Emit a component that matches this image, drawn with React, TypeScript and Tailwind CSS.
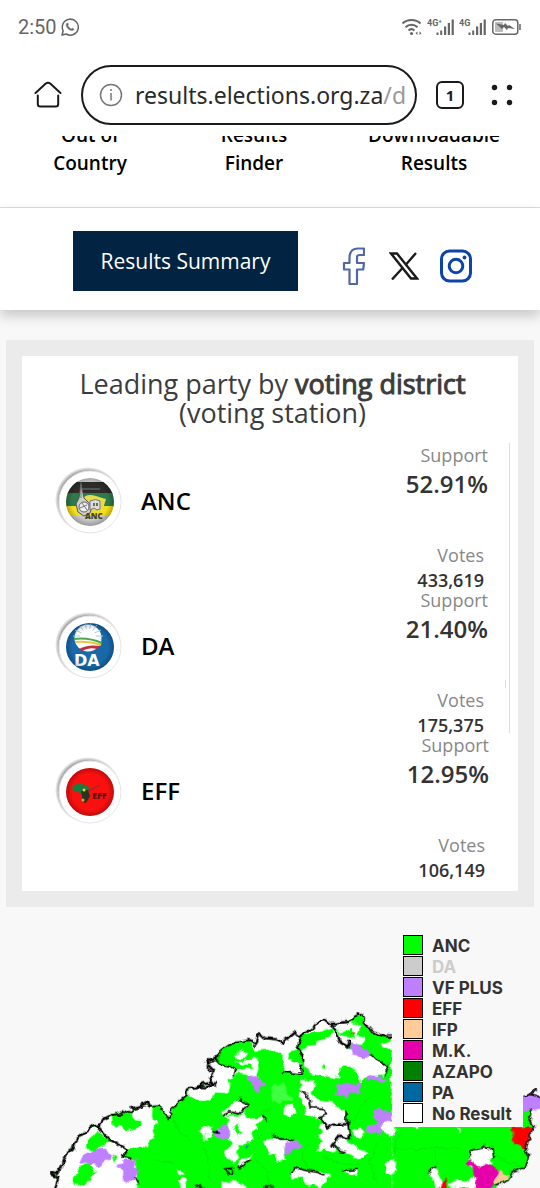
import React from "react";

const PARTIES = [
    { name: "ANC", support: "52.91%", votes: "433,619" },
    { name: "DA", support: "21.40%", votes: "175,375" },
    { name: "EFF", support: "12.95%", votes: "106,149" },
];

const LEGEND = [
    { label: "ANC", swatch: "bg-[#00ff00]", text: "text-[#333]" },
    { label: "DA", swatch: "bg-[#cccccc]", text: "text-[#cccccc]" },
    { label: "VF PLUS", swatch: "bg-[#bf80ff]", text: "text-[#333]" },
    { label: "EFF", swatch: "bg-[#ff0000]", text: "text-[#333]" },
    { label: "IFP", swatch: "bg-[#ffcc99]", text: "text-[#333]" },
    { label: "M.K.", swatch: "bg-[#e600ac]", text: "text-[#333]" },
    { label: "AZAPO", swatch: "bg-[#008000]", text: "text-[#333]" },
    { label: "PA", swatch: "bg-[#0068a0]", text: "text-[#333]" },
    { label: "No Result", swatch: "bg-white", text: "text-[#333]" },
];

const Signal = ({ label }: { label: string }) => (
    <svg viewBox="0 0 28 18" className="w-7 h-[18px]" fill="#666">
        <text x="0" y="8" fontSize="9" fontWeight="700" fontFamily="Roboto, sans-serif">{label}</text>
        <path d="M9.500 14.500h2v2.500h-2zM13.200 12.500h2v4.500h-2zM17 8.500h2.200v8.500H17zM20.800 5h2.200v12h-2.200zM24.600 1.500h2.200V17h-2.200z" />
    </svg>
);

const StatusBar = () => (
    <div className="flex items-center justify-between h-[54px] pl-[18px] pr-[18px] text-[#666]">
        <div className="flex items-center gap-1">
            <span className="font-['Roboto',sans-serif] text-[20px] leading-6">2:50</span>
            <svg viewBox="0 0 18 18" className="w-[18px] h-[18px]" fill="none" stroke="#666" strokeWidth="1.5">
                <path d="M1 17l1.200-4.200A8 8 0 1 1 5.200 16z" strokeLinejoin="round" />
                <path d="M5.500 5.600c.8-1.200 1.500-.8 2 .8l-.7 1.100c.8 1.700 1.800 2.700 3.500 3.500l1.100-.8c1.700.6 2 1.200.8 2-3.200 1.400-8.300-3.200-6.700-6.600z" fill="#666" strokeWidth=".4" />
            </svg>
        </div>
        <div className="flex items-center gap-1">
            <svg viewBox="0 0 22 18" className="w-[22px] h-[18px]" fill="none" stroke="#666" strokeWidth="2">
                <path d="M1.500 5.500c5-4.600 13-4.600 18 0M4.500 9.200c3.400-3.200 8.600-3.200 12 0M7.500 12.500c1.800-1.700 4.200-1.700 6 0" />
                <circle cx="10.500" cy="15.500" r="1.600" fill="#666" stroke="none" />
                <path d="M14.500 15.200l2-1.700v3.400zM20.500 15.200l-2-1.700v3.400z" fill="#666" stroke="none" />
            </svg>
            <Signal label="4G⁺" />
            <Signal label="4G" />
            <svg viewBox="0 0 31 18" className="w-[31px] h-[18px]" fill="none">
                <rect x="1.800" y="1.800" width="25" height="14.400" rx="3" stroke="#666" strokeWidth="1.500" />
                <rect x="4" y="4" width="8" height="10" rx="1" fill="#bbb" />
                <path d="M5 5.500l8 1.500 1-2 3 3 1-1 6 4-7-1-1 2-3-3-2 2z" fill="#666" />
                <path d="M29 6v6" stroke="#666" strokeWidth="1.500" />
            </svg>
        </div>
    </div>
);

const AddressBar = () => (
    <div className="flex items-center h-[82px] pl-[33px] pr-[26px]">
        <button aria-label="Home" className="shrink-0">
            <svg viewBox="0 0 30 30" className="w-[30px] h-[30px]" fill="none" stroke="#1a1a1a" strokeWidth="2" strokeLinecap="round" strokeLinejoin="round">
                <path d="M2.500 13L12.500 3.800q2.500-2 5 0L27.500 13" />
                <path d="M4.800 15.500v8.500q0 2.500 2.500 2.500h15.400q2.500 0 2.500-2.500v-8.500" />
            </svg>
        </button>
        <div className="flex items-center flex-1 min-w-0 h-[60px] ml-[18px] pl-4 pr-1 gap-3 rounded-full border-2 border-[#1a1a1a]">
            <svg viewBox="0 0 24 24" className="w-6 h-6 shrink-0" fill="none" stroke="#777" strokeWidth="1.500">
                <circle cx="12" cy="12" r="10.500" />
                <path d="M12 10v7.500" />
                <circle cx="12" cy="7" r="1" fill="#777" stroke="none" />
            </svg>
            <div className="flex-1 min-w-0 overflow-hidden whitespace-nowrap font-['Noto_Sans',sans-serif] text-[23px] leading-8 text-[#2a2a2a]">
                results.elections.org.za<span className="text-[#999]">/d</span>
            </div>
        </div>
        <button aria-label="Open tabs" className="shrink-0 ml-[19px] flex items-center justify-center w-7 h-7 rounded-[6px] border-2 border-[#1a1a1a] font-['Noto_Sans',sans-serif] font-bold text-[15px] leading-5 text-[#1a1a1a]">
            1
        </button>
        <button aria-label="Menu" className="shrink-0 ml-[26px]">
            <svg viewBox="0 0 24 24" className="w-6 h-6" fill="#1a1a1a">
                <circle cx="4.500" cy="4.500" r="2.700" />
                <circle cx="19.500" cy="4.500" r="2.700" />
                <circle cx="4.500" cy="19.500" r="2.700" />
                <circle cx="19.500" cy="19.500" r="2.700" />
            </svg>
        </button>
    </div>
);

const NavLinks = () => (
    <nav className="flex flex-col justify-end h-[72px] overflow-hidden border-b border-[#ddd] pb-[30px]">
        <div className="grid grid-cols-[180fr_148fr_212fr] text-center font-semibold text-[19px] leading-7 text-black">
            <a href="#country">Out of<br />Country</a>
            <a href="#finder">Results<br />Finder</a>
            <a href="#downloads">Downloadable<br />Results</a>
        </div>
    </nav>
);

const SummaryBar = () => (
    <div className="relative flex items-start h-[102px] pt-[23px] pl-[73px] bg-white shadow-[0_6px_12px_rgba(0,0,0,0.2)]">
        <button className="w-[225px] h-[60px] bg-[#022442] text-white text-[21px] leading-7">
            Results Summary
        </button>
        <div className="flex items-center h-[60px] mt-[5px] ml-[43px] gap-6">
            <a href="#facebook" aria-label="Facebook">
                <svg viewBox="0 0 24 40" className="w-6 h-10" fill="none" stroke="#5068a8" strokeWidth="2.200" strokeLinejoin="round">
                    <path d="M3 17h5.500v-5q0-9.500 8.500-9.500h6v6.500h-4.500q-2.500 0-2.500 2.500v5.500h7l-.8 6.500H16v14.500H8.500v-14.500H3z" />
                </svg>
            </a>
            <a href="#x" aria-label="X">
                <svg viewBox="0 0 30 28" className="w-[30px] h-7" fill="none" stroke="#1a1a1a" strokeWidth="2.400">
                    <path d="M2 1.500h6L28 26.500h-6z" />
                    <path d="M27 1L17 12.500M13.500 16L3 27.500" />
                </svg>
            </a>
            <a href="#instagram" aria-label="Instagram" className="-ml-1">
                <svg viewBox="0 0 34 34" className="w-[34px] h-[34px]" fill="none" stroke="#0c44a8" strokeWidth="3">
                    <rect x="2.500" y="2" width="29" height="30" rx="8" />
                    <circle cx="17" cy="17" r="6.800" />
                    <circle cx="25.500" cy="8.500" r="1.900" fill="#0c44a8" stroke="none" />
                </svg>
            </a>
        </div>
    </div>
);

const PartyLogo = ({ name }: { name: string }) => (
    <svg viewBox="0 0 68 68" className="w-[68px] h-[68px]">
        <defs>
            <radialGradient id={`rim-${name}`}>
                <stop offset="0.820" stopColor="#777" />
                <stop offset="1" stopColor="#fff" />
            </radialGradient>
            <radialGradient id={`shade-${name}`}>
                <stop offset="0.750" stopColor="#000" stopOpacity="0" />
                <stop offset="1" stopColor="#000" stopOpacity="0.250" />
            </radialGradient>
            <clipPath id={`disc-${name}`}>
                <circle cx="35" cy="35" r="24" />
            </clipPath>
        </defs>
        <circle cx="33" cy="33" r="33" fill={`url(#rim-${name})`} />
        <circle cx="35" cy="35" r="31" fill="#fff" stroke="#e6e6e6" strokeWidth="1" />
        <g clipPath={`url(#disc-${name})`}>
            {name === "ANC" && (
                <>
                    <path d="M8 11h54v6H8z" fill="#d8d8d8" />
                    <path d="M8 15h54v12H8z" fill="#2c2c2a" />
                    <path d="M8 26h54v14H8z" fill="#2f7a4c" />
                    <path d="M8 39h54v10H8z" fill="#f3dd1c" />
                    <path d="M8 49h54v12H8z" fill="#c9c9c9" />
                    <path d="M28 31q4-5 13-2t10 3l-3 10q-6 5-13 3l-9-3z" fill="#e5dc4a" />
                    <path d="M26 17l-2 14-3 6 2 8 6 4 6-3 2-6-4-5-4-4z" fill="#c9cfca" stroke="#555" strokeWidth="1" />
                    <circle cx="29" cy="40" r="5" fill="#eee" stroke="#666" strokeWidth="1" />
                    <path d="M26 15v16M25 22h20M27 36l5 7M25 41l7-3" stroke="#777" strokeWidth="1" fill="none" />
                    <path d="M35 34q6-3 10 0v8l-3 1-3-2-4 2z" fill="#ddd" stroke="#777" strokeWidth="1" />
                    <path d="M39 36v3M42 36v3" stroke="#444" strokeWidth="1.500" />
                    <text x="30" y="52" fontSize="8" fontWeight="800" fontFamily="Open Sans, sans-serif" fill="#4a4020">ANC</text>
                </>
            )}
            {name === "DA" && (
                <>
                    <path d="M8 8h54v54H8z" fill="#1769aa" />
                    <circle cx="33" cy="26" r="13.500" fill="#fff" />
                    <path d="M33 24L18 24M33 24L20 18M33 24L24 13M33 24L30 11M33 24L36 11M33 24L42 13M33 24L46 18M33 24L48 24" stroke="#a9cbe4" strokeWidth="1" />
                    <circle cx="33" cy="25" r="8" fill="#fff" />
                    <path d="M19 27q14-2 28 4" stroke="#4da650" strokeWidth="2" fill="none" />
                    <path d="M20 30q14-1 26 3" stroke="#eec340" strokeWidth="2" fill="none" />
                    <path d="M24 37q9-5 21-3l-3 3q-8-2-15 2z" fill="#c52c3e" />
                    <text x="19" y="54" fontSize="16" fontWeight="800" fontFamily="DejaVu Sans, sans-serif" fill="#fff">DA</text>
                </>
            )}
            {name === "EFF" && (
                <>
                    <path d="M8 8h54v54H8z" fill="#fb1010" />
                    <path d="M17 30q4-4 10-3l6 2 2 5-6 4-6-3-5-1z" fill="#1b7a3c" />
                    <path d="M27 37l18-9" stroke="#8a3020" strokeWidth="1.200" />
                    <path d="M26 34l7-1 2 6-4 7-3-1z" fill="#26331f" />
                    <circle cx="29" cy="33" r="1.500" fill="#e4d034" />
                    <circle cx="28" cy="43" r="1.500" fill="#b9b530" />
                    <text x="37" y="42" fontSize="9" fontWeight="800" fontFamily="Open Sans, sans-serif" fill="#5c1010">EFF</text>
                </>
            )}
            <circle cx="35" cy="35" r="24" fill={`url(#shade-${name})`} />
        </g>
    </svg>
);

const PartyRow = ({ party }: { party: any }) => (
    <div className="flex justify-between h-[145px] ml-[33px] mr-2 pr-[21px] border-r border-[#ddd] last:border-r-0">
        <div className="flex items-center gap-[18px] h-[116px]">
            <PartyLogo name={party.name} />
            <span className="font-semibold text-[24px] leading-8 text-black">{party.name}</span>
        </div>
        <div className="text-right text-[#333]">
            <div className="text-[18px] leading-6 text-[#888]">Support</div>
            <div className="text-[24px] leading-[34px] font-semibold">{party.support}</div>
            <div className="mt-[42px] pr-1 text-[18px] leading-6 text-[#888]">Votes</div>
            <div className="mt-[5px] pr-1 text-[18px] leading-4 font-semibold">{party.votes}</div>
        </div>
    </div>
);

const LeadingParties = () => (
    <section className="mx-[6px] mt-[30px] p-4 bg-[#ebebeb]">
        <div className="bg-white pt-[13px] pb-[13px]">
            <h2 className="mb-4 pl-[5px] text-center text-[27px] leading-[29px] text-[#3c3c3c]">
                Leading party by <span className="[-webkit-text-stroke:1px_#3c3c3c]">voting district</span>
                <br />
                (voting station)
            </h2>
            <div className="relative">
                <span className="absolute top-[237px] right-3 w-px h-2 bg-[#ddd]" />
                {PARTIES.map((party) => (
                    <PartyRow key={party.name} party={party} />
                ))}
            </div>
        </div>
    </section>
);

const DistrictMap = () => (
    <svg viewBox="0 0 1620 804" className="block w-full" strokeLinejoin="round" strokeLinecap="round">
        <defs>
            {/* Roughens every boundary like a surveyed coastline */}
            <filter id="rough" filterUnits="userSpaceOnUse" x="0" y="0" width="1620" height="804">
                <feTurbulence type="fractalNoise" baseFrequency="0.045" numOctaves="2" seed="4" result="noise" />
                <feDisplacementMap in="SourceGraphic" in2="noise" scale="20" xChannelSelector="R" yChannelSelector="G" />
            </filter>
        </defs>
        <g filter="url(#rough)">
            {/* North-west */}
            <g transform="translate(120 420)">
                <path d="M45 400L55 350 35 345 35 335 50 340 65 320 80 280 105 250 120 228 145 208 165 195 175 200 185 180 215 165 250 152 270 160 285 140 325 128 335 140 355 138 370 150 382 175 395 168 395 145 440 105 440 90 470 78 525 72 600 72 600 400z" fill="#0f0" />
                <path d="M42 400L55 350 35 345 50 340 65 320 80 280 105 250 145 208 175 200 205 238 262 268 250 290 290 300 292 400z" fill="#fff" />
                <path d="M175 200L185 180 215 165 218 195 240 198 260 212 285 207 302 195 300 180 285 178 275 160 285 140 325 128 335 145 333 175 352 185 338 210 345 235 330 242 320 265 300 258 262 268 205 238z" fill="#fff" />
                <path d="M137 265L140 245 155 232 175 212 188 228 212 242 190 260 175 266 160 272z" fill="#0f0" />
                <path d="M92 370L100 350 110 345 118 318 150 310 162 332 176 338 148 345 152 362 130 375z" fill="#0f0" />
                <path d="M218 285l12 8-4 20z" fill="#0f0" />
                <path d="M117 310L130 285 150 278 160 268 198 266 206 280 218 292 200 302 178 320 160 312z" fill="#bf80ff" />
                <path d="M228 315L250 310 250 302 290 296 285 325 300 332 286 345 290 358 270 366 248 362 250 335z" fill="#bf80ff" />
                <path d="M440 90L470 78 525 72 530 100 515 125 475 124 445 110z" fill="#fff" />
                <path d="M525 72L520 40 500 20 505 0 600 0 600 50 575 68 572 104 545 100z" fill="#fff" />
                <path d="M530 0h45l-10 12-25-5zM580 15l20 10v20l-15-5z" fill="#0f0" />
                <path d="M475 202l25 5 18-10 8 15 20 2-15 15-12 18-25-5-8-20-8-5z" fill="#fff" />
                <path d="M525 225L530 210 550 198 565 205 568 232 550 236z" fill="#bf80ff" />
                <path d="M410 330l18 4 7 4-18 8zM418 352h20l3 14-5 34h-12l-5-18z" fill="#fff" />
                <path d="M42 400L55 350 35 345 35 335 50 340 65 320 68 300 80 280 98 270 105 250 120 228 145 208 165 195 175 200 185 180 215 165M275 160L275 145 298 138 325 128 328 140M175 200L205 238 228 248 262 268 250 290 270 296M440 105V90L470 78 500 70 525 74 515 62 520 40 500 20 505 0" fill="none" stroke="#000" strokeWidth="7" />
                <path d="M215 165L235 162 250 152 270 160M328 140L355 138 370 150 382 175 395 168 390 155 400 140 440 105M555 160l15-5 30 8M518 215l6 12M285 350l10 20M555 330l15-6 10 14-12 10zM465 384q20-12 30 0" fill="none" stroke="#000" strokeWidth="5" />
                <path d="M400 170l15 45 40 30 30 25 20 40M520 260l-10 60 15 50M340 300l60 8" fill="none" stroke="#00d800" strokeWidth="2" />
            </g>
            {/* Northern border */}
            <g transform="translate(570 240)">
                <path d="M0 262L75 252 60 235 70 210 50 185 75 178 95 150 125 130 175 120 195 125 205 100 225 115 275 130 315 95 330 110 370 75 405 60 430 72 480 65 495 45 510 38 522 50 520 70 545 95 580 108 605 110 605 580 0 580z" fill="#0f0" />
                <path d="M0 266L75 252 60 235 70 210 50 185 75 178 90 192 128 200 140 222 118 240 120 265 105 282 75 280 60 304 20 302 0 288z" fill="#fff" />
                <path d="M135 165l18-12 18 8-5 12-25 2zM130 188l40-8 32-8 4 38-10 25-30-12-28-2 5-12 50-4-10-10z" fill="#fff" />
                <path d="M178 125L195 125 205 100 225 115 275 130 315 95 330 110 322 130 325 150 295 160 302 188 334 192 333 222 276 216 282 185 272 155 240 148 200 152z" fill="#fff" />
                <path d="M330 110L370 75 405 60 430 72 480 65 510 78 500 105 530 110 520 135 475 130 470 140 545 170 597 198 590 225 535 230 510 248 500 215 480 200 455 202 448 235 400 228 360 222 345 195 335 150 425 105 415 90z" fill="#fff" />
                <path d="M332 125L375 100 428 82 432 100 400 115 350 138 335 140z" fill="#0f0" />
                <path d="M430 75L455 100 490 82 495 115 455 110zM392 205l10-15 2 15zM448 205l20-8 30 12 4 30-15 15-40-15z" fill="#0f0" />
                <path d="M485 100l10-4v5l-10 4z" fill="#d4471a" />
                <path d="M478 122l12 4 50 30-2 16-25 2-28-12z" fill="#bf80ff" />
                <path d="M440 255l30-10 10 10 32-10-5 20 5 20-30-8-10 22-15-10-20-5zM528 235l10-10 56 8 2 12-60-2zM170 230l25-5 15 15 20 18-18 5-5 15-20-15-5-18z" fill="#bf80ff" />
                <path d="M528 395l8-20 24-8-8-38 10-5 20 12h24l2 48-25 5-10 15z" fill="#bf80ff" />
                <path d="M580 370l15-8 15 5 5 40-20 2-5-15-12-8zM575 130l30-8v30l-25-10z" fill="#fff" />
                <path d="M242 300l8-48 10-5 18 5 12 28 15 10 2 10-28-2-10 10z" fill="#40ff40" />
                <path d="M92 338l25-12 10-20 20-5 30 15-20 30-30-5-22 5z" fill="#fff" />
                <path d="M105 345l40 5 20-6 8 10 50-5-25 28 5 10-20 10 8 22-35 15-40-15 5-15-12-20 10-25z" fill="#fff" />
                <path d="M130 380l10-10 10 20 12 5-20 8z" fill="#0f0" />
                <path d="M105 450l15-8 10-20 18 10 2 15-12 5 10 25-22 12-15-12zM142 498l12-18 32-15-8 22-25 14z" fill="#fff" />
                <path d="M75 395l10-10 25-8 10 18-5 22-18 3-25-12z" fill="#bf80ff" />
                <path d="M25 392l20-15 20-3 2 20-8 22-20 10 4-20zM285 315l25-5 5 12 4 20-15 8-20-10zM215 430l30-20 28 8 32-5-25 35 5 30-22 10-3-22-20-8-12-18z" fill="#fff" />
                <path d="M280 462l3-28 25-15 18 2 15 24-30 2-5 12z" fill="#bf80ff" />
                <path d="M335 240l40 2-2 20 -12 18 25 22 42 5 40 33 4 80-24 10-18 28-25-10 -24 6 8-24 22-10-8-14 -18-24 14-16-24-16-28-4-4-26-14-30z" fill="#fff" />
                <path d="M412 385l62-8 4 38-30-5-18 14-34 2-12-20z" fill="#fff" />
                <path d="M440 420l20-10 10 15 25 15 38 20-10 12-30 3-5-15-30-3-20-15zM490 390l20-8 14 15-14 14-15-2zM585 490l20-10 8 20-8 22-15-10zM305 518l20-14 30 8 42 4 26 12-20 20-15 15-38-10-15-20-28 2zM462 510l15 2 28-6v20l-28 2zM95 548l35-5 35 10v27H95z" fill="#fff" />
                <path d="M165 437l12-2-8 12z" fill="#1480b0" />
                <path d="M0 264L25 260 50 262 75 254 60 235 72 210 48 185 75 178 80 165M180 120L195 132 205 100 225 115 260 118 275 130 315 95 332 108 325 125 322 140 330 160 340 180M330 110L372 85 372 72 405 60 420 72 480 65 495 50M428 75L455 130 475 140 478 122M522 68L545 95 580 108 605 110M390 352l22 32 15-10 48-2 5 40-30-5-20 28" fill="none" stroke="#000" strokeWidth="7" />
                <path d="M80 165L95 150 125 130 165 122 180 120M495 50L510 38 522 50 522 68M78 178l15 15 32 6 12 10-4 15M276 216l57 5 1-25M540 166l57 32-10 27M336 275l20 20 5 28 35 2 15 18-20 10M468 338l4 34M100 343l20-8 30 8 25-28-28-12v-10M65 395l20 4M248 405l22 12 36 0M218 350l10 10M108 508l18-4 5 18-15-2zM145 504l35-20M305 520l15-16 30 8 30 4 22 8M460 512l42-4M430 435l10 14 25 6M20 562q12-8 25 0M222 558l28 2" fill="none" stroke="#000" strokeWidth="5" />
                <path d="M50 400l-10 40 15 40 5 60M200 480l30 30 10 50M355 430l-20 40 15 30M540 290l-30 30-20 50M400 470l50 20 60 5M560 430l-20 60 20 50M240 320l-25 30" fill="none" stroke="#00d800" strokeWidth="2" />
            </g>
            {/* East */}
            <g transform="translate(1140 0)">
                <path d="M35 600L435 572 450 570 448 590 462 620 450 640 437 685 445 710 440 740 415 750 395 757 385 780 350 795 340 820 35 820z" fill="#0f0" />
                <path d="M420 525L452 522 455 508 470 508 465 520 480 530 480 565 450 574 420 574z" fill="#bf80ff" />
                <path d="M398 622h60l-8 20-13 45-38-16z" fill="#f00" />
                <path d="M10 610l35 0 2 28-10 10-27-15zM100 620l20 0-8 9zM230 622l10 5-2 14zM15 730l32-14-4 22 5 10-12 18-18-5zM270 712l15-25 30-12 20 12 5 20-8 12 6 14-22 15-25 10-22-15zM142 754l30-12 5 20 10 20 12 20-35 2-5-25zM210 790l20-10 35 2 20-20 15-8-5 22 12 25-95 3z" fill="#fff" />
                <path d="M258 730l18-10 10 14 15 12 18-15 36 20-10 40-15 24-40-3-5-38-8-30-15-5z" fill="#e600ac" />
                <path d="M355 752l20 10 10-4-5 20-30 14-8-10z" fill="#ffcc99" />
                <path d="M180 814l8-30 12-8 4 38z" fill="#f00" />
                <path d="M432 527L452 522M480 530L455 520 458 508 472 510 462 518M450 572L446 590 462 620M462 616L450 640 452 655 440 662 436 685 445 710 438 740 415 750 395 757 385 780 350 795M270 712L278 690 308 684 312 674 322 686 338 680 342 710M145 756l25-14" fill="none" stroke="#000" strokeWidth="5" />
                <path d="M40 680l60 10 70-10 70 5M160 680l10 50-40 40M340 700l40 25 50 15M60 640l-20 60" fill="none" stroke="#00d800" strokeWidth="2" />
            </g>
        </g>
    </svg>
);

const Legend = () => (
    <ul className="absolute top-[27px] right-[17px] w-[131px] pl-[11px] pb-1 bg-[#f8f8f8]">
        {LEGEND.map((item) => (
            <li key={item.label} className="flex items-center gap-[9px] h-[21px]">
                <span className={`w-5 h-5 border border-black ${item.swatch}`} />
                <span className={`whitespace-nowrap pt-[2px] font-['Inter',sans-serif] font-bold text-[17px] leading-5 ${item.text}`}>{item.label}</span>
            </li>
        ))}
    </ul>
);

export default function App() {
    return (
        <div className="w-full overflow-hidden bg-[#f8f8f8] font-['Open_Sans',sans-serif]">
            <header className="bg-white">
                <StatusBar />
                <AddressBar />
                <NavLinks />
                <SummaryBar />
            </header>
            <main>
                <LeadingParties />
                <section className="relative pt-[13px]">
                    <DistrictMap />
                    <Legend />
                </section>
            </main>
        </div>
    );
}
